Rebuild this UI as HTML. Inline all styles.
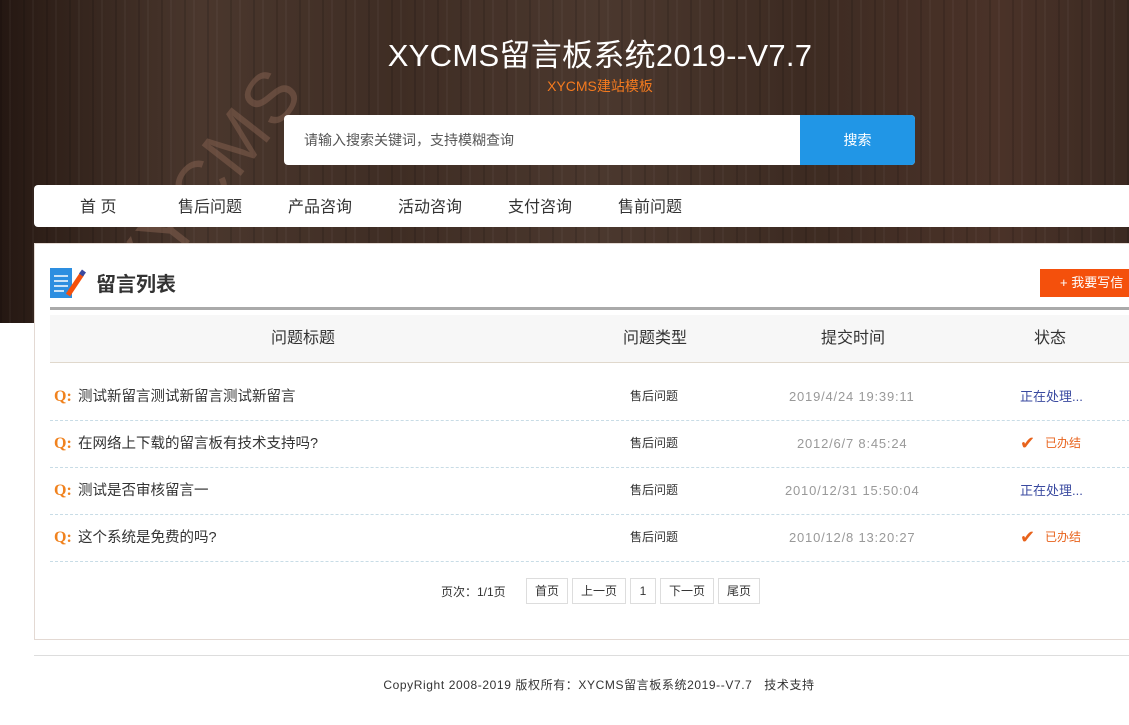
<!DOCTYPE html>
<html><head><meta charset="utf-8"><style>
*{margin:0;padding:0;box-sizing:border-box}
body{width:1129px;height:725px;overflow:hidden;background:#fff;font-family:"Liberation Sans","Noto Sans CJK SC",sans-serif;position:relative}
.hd{position:absolute;left:0;top:0;width:1129px;height:323px;overflow:hidden;background:linear-gradient(90deg,#241712 0,#2e1f18 40px,#4a372d 200px,#3f2d24 400px,#4b382e 600px,#3d2b22 800px,#4a3228 1000px,#3b2a22 1129px)}
.hd:before{content:"";position:absolute;inset:0;background:repeating-linear-gradient(90deg,rgba(0,0,0,.12) 0 2px,transparent 2px 9px,rgba(255,255,255,.03) 9px 11px,transparent 11px 23px)}
.wm{position:absolute;left:95px;top:265px;font-size:72px;color:rgba(130,95,78,.55);transform:rotate(-52deg);transform-origin:left top;letter-spacing:2px;line-height:1}
.t1{position:absolute;top:30px;left:0;width:1200px;text-align:center;color:#fff;font-size:31px;letter-spacing:.3px}
.t2{position:absolute;top:76px;left:0;width:1200px;text-align:center;color:#f47a1f;font-size:14px}
.srch{position:absolute;left:284px;top:115px;width:631px;height:50px;background:#fff;border-radius:4px;overflow:hidden}
.srch span{position:absolute;left:20px;top:15px;font-size:14px;color:#555}
.srch b{position:absolute;right:0;top:0;width:115px;height:50px;background:#2196e6;color:#fff;font-weight:normal;font-size:14px;text-align:center;line-height:50px}
.nav{position:absolute;left:34px;top:185px;width:1110px;height:42px;background:#fff;border-radius:4px}
.nav span{position:absolute;top:8px;font-size:16px;color:#333}
.main{position:absolute;left:34px;top:243px;width:1100px;height:397px;background:#fff;border:1px solid #e3d9d3}
.ttl{position:absolute;left:96px;top:268px;font-size:20px;font-weight:bold;color:#333}
.btn{position:absolute;left:1040px;top:269px;width:95px;height:28px;background:#f4500c;color:#fff;font-size:13px;line-height:28px;padding-left:20px}
.bar{position:absolute;left:50px;top:307px;width:1080px;height:3px;background:#aaa}
.th{position:absolute;left:50px;top:315px;width:1080px;height:48px;background:#f7f7f7;border-bottom:1px solid #e0d8cc}
.th span,.row span{position:absolute;white-space:nowrap;line-height:1}
.th span{top:16px;font-size:16px;color:#333;transform:translateX(-50%)}
.row{position:absolute;left:50px;width:1080px;height:47px;border-bottom:1px dashed #c8dce6}
.row span{top:16px;font-size:13px}
.q{left:4px;color:#f0821e;font-weight:bold;font-family:"Liberation Serif",serif;font-size:16px!important;top:15px!important}
.tt{left:28px;color:#333;font-size:14.5px!important;top:16px!important}
.dt{color:#999;letter-spacing:.8px}
.pg{position:absolute;top:578px;height:26px;border:1px solid #ddd;font-size:12px;line-height:24px;text-align:center;color:#333}
.ft{position:absolute;left:44px;top:655px;width:1110px;border-top:1px solid #ddd;text-align:center;padding-top:21px;font-size:12px;color:#333;letter-spacing:.6px}
.fl{position:absolute;left:34px;top:655px;width:1100px;border-top:1px solid #ddd}
</style></head><body>
<div class="hd"><div class="wm">XYCMS</div></div>
<div class="t1">XYCMS留言板系统2019--V7.7</div>
<div class="t2">XYCMS建站模板</div>
<div class="srch"><span>请输入搜索关键词，支持模糊查询</span><b>搜索</b></div>
<div class="nav"><span style="left:46px">首 页</span><span style="left:144px">售后问题</span><span style="left:254px">产品咨询</span><span style="left:364px">活动咨询</span><span style="left:474px">支付咨询</span><span style="left:584px">售前问题</span></div>
<div class="main"></div>
<svg style="position:absolute;left:50px;top:268px" width="38" height="31"><rect x="0" y="0" width="22" height="30" fill="#2d8ee0"/><g stroke="#fff" stroke-width="1.5"><line x1="4" y1="8" x2="18" y2="8"/><line x1="4" y1="13" x2="18" y2="13"/><line x1="4" y1="18" x2="18" y2="18"/><line x1="4" y1="23" x2="14" y2="23"/></g><line x1="18" y1="27" x2="32" y2="6" stroke="#f4500c" stroke-width="5"/><line x1="31" y1="7" x2="34" y2="3" stroke="#3a4aa0" stroke-width="5"/></svg>
<div class="ttl">留言列表</div>
<div class="btn">+ 我要写信</div>
<div class="bar"></div>
<div class="th"><span style="left:253px">问题标题</span><span style="left:605px">问题类型</span><span style="left:803px">提交时间</span><span style="left:1000px">状态</span></div>
<div class="row" style="top:374px"><span class="q">Q:</span><span class="tt">测试新留言测试新留言测试新留言</span><span style="left:580px;font-size:12px;color:#333">售后问题</span><span class="dt" style="left:739px">2019/4/24 19:39:11</span><span style="left:970px;color:#3a4aa0">正在处理...</span></div>
<div class="row" style="top:421px"><span class="q">Q:</span><span class="tt">在网络上下载的留言板有技术支持吗?</span><span style="left:580px;font-size:12px;color:#333">售后问题</span><span class="dt" style="left:747px">2012/6/7 8:45:24</span><span style="left:970px;top:13px;color:#e8631c;font-size:18px">✔</span><span style="left:995px;color:#e8631c;font-size:12px">已办结</span></div>
<div class="row" style="top:468px"><span class="q">Q:</span><span class="tt">测试是否审核留言一</span><span style="left:580px;font-size:12px;color:#333">售后问题</span><span class="dt" style="left:735px">2010/12/31 15:50:04</span><span style="left:970px;color:#3a4aa0">正在处理...</span></div>
<div class="row" style="top:515px"><span class="q">Q:</span><span class="tt">这个系统是免费的吗?</span><span style="left:580px;font-size:12px;color:#333">售后问题</span><span class="dt" style="left:739px">2010/12/8 13:20:27</span><span style="left:970px;top:13px;color:#e8631c;font-size:18px">✔</span><span style="left:995px;color:#e8631c;font-size:12px">已办结</span></div>
<div style="position:absolute;left:441px;top:583px;font-size:12px;color:#333">页次：1/1页</div>
<div class="pg" style="left:526px;width:42px">首页</div>
<div class="pg" style="left:572px;width:54px">上一页</div>
<div class="pg" style="left:630px;width:26px">1</div>
<div class="pg" style="left:660px;width:54px">下一页</div>
<div class="pg" style="left:718px;width:42px">尾页</div>
<div class="fl"></div>
<div class="ft" style="border:0">CopyRight 2008-2019 版权所有：XYCMS留言板系统2019--V7.7 &nbsp; 技术支持</div>
</body></html>
